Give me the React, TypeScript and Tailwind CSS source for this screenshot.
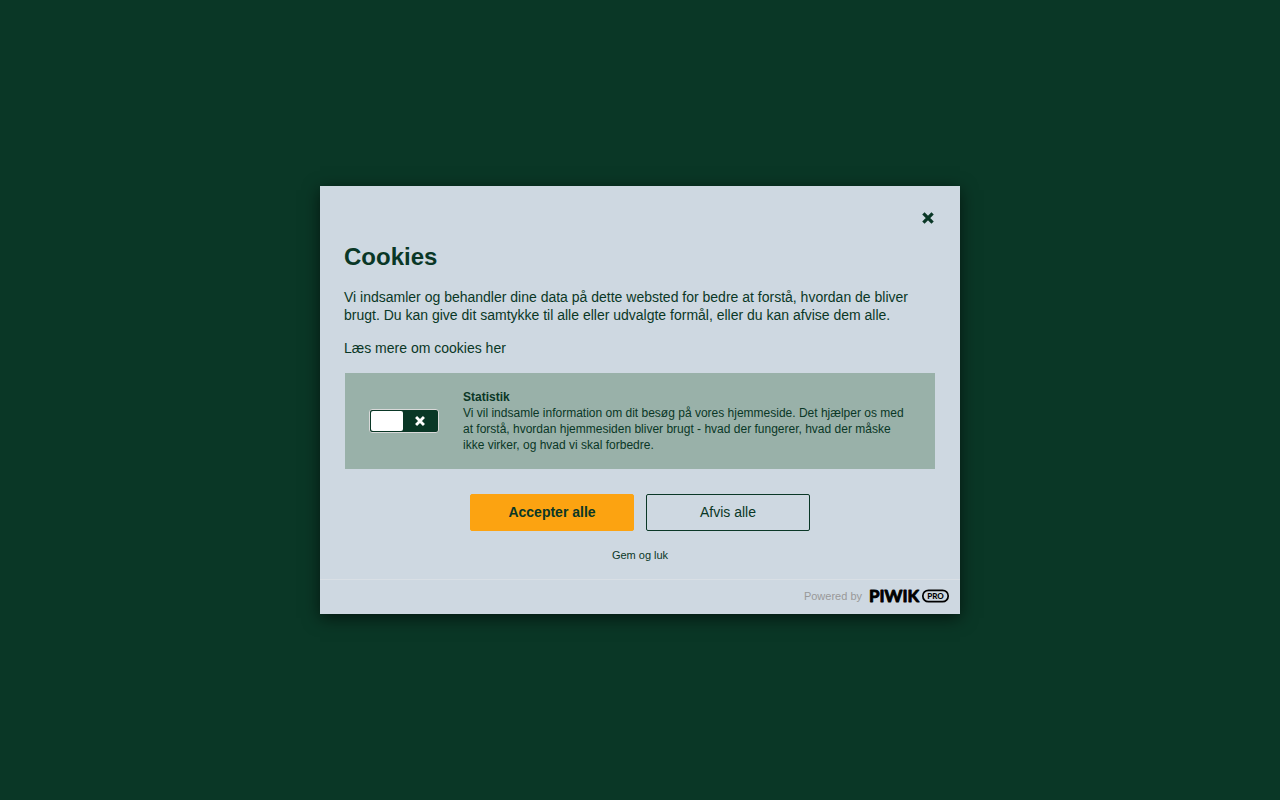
import { useState } from "react";

const CrossIcon = ({ className }: { className: string }) => (
  <svg viewBox="0 0 14 14" className={className} aria-hidden="true">
    <path
      d="M2.4 2.4L11.6 11.6M11.6 2.4L2.4 11.6"
      fill="none"
      stroke="currentColor"
      strokeWidth="3.3"
    />
  </svg>
);

const PiwikLogo = () => (
  <svg
    width="80"
    height="18"
    viewBox="0 0 80 18"
    className="overflow-visible"
    role="img"
    aria-label="Piwik PRO"
  >
    <text
      x="-1"
      y="15"
      fontFamily="Lato, sans-serif"
      fontSize="17"
      fontWeight="700"
      stroke="#000"
      strokeWidth="0.9"
      strokeLinejoin="round"
    >
      PIWIK
    </text>
    <rect
      x="52.8"
      y="3.3"
      width="25.4"
      height="11.4"
      rx="5.7"
      fill="none"
      stroke="#000"
      strokeWidth="1.7"
    />
    <text
      x="65.5"
      y="12"
      textAnchor="middle"
      fontFamily="Lato, sans-serif"
      fontSize="8"
      fontWeight="900"
    >
      PRO
    </text>
  </svg>
);

const ConsentSwitch = () => {
  const [checked, setChecked] = useState(false);

  return (
    <label
      htmlFor="statistik"
      className={`relative flex h-6 w-[70px] shrink-0 cursor-pointer items-center rounded-[3px] border border-[#d9d9d9] bg-[#0a3726] p-px ${
        checked ? "flex-row-reverse" : ""
      }`}
    >
      <input
        id="statistik"
        type="checkbox"
        className="sr-only"
        aria-labelledby="statistik-title"
        checked={checked}
        onChange={(e) => setChecked(e.target.checked)}
      />
      <span className="h-5 w-8 rounded-xs bg-white" />
      <span className="flex flex-1 justify-center text-white">
        <CrossIcon className="size-3" />
      </span>
    </label>
  );
};

export default function App() {
  return (
    <div className="flex min-h-screen items-center justify-center bg-[#0a3726] font-['Liberation_Sans',Arial,sans-serif] text-[#0a3726]">
      <div
        role="dialog"
        aria-labelledby="consent-title"
        className="w-full max-w-[640px] bg-[#ced8e1] shadow-[0_4px_16px_rgba(0,0,0,0.6)]"
      >
        <div className="px-6 pt-6">
          <div className="flex justify-end">
            <button type="button" aria-label="Luk" className="flex size-4 items-center justify-center">
              <CrossIcon className="size-3.5" />
            </button>
          </div>
          <h1 id="consent-title" className="mt-4 text-2xl leading-[30px] font-bold">
            Cookies
          </h1>
          <p className="mt-4 text-sm leading-[18px]">
            Vi indsamler og behandler dine data på dette websted for bedre at
            forstå, hvordan de bliver brugt. Du kan give dit samtykke til alle
            eller udvalgte formål, eller du kan afvise dem alle.
          </p>
          <p className="mt-[15px] text-sm leading-[18px]">
            <a href="#cookies">Læs mere om cookies her</a>
          </p>

          <div className="mx-px mt-4 flex items-center gap-6 bg-[#99b1a9] px-6 py-4">
            <ConsentSwitch />
            <div className="text-xs leading-4">
              <h2 id="statistik-title" className="font-bold">
                Statistik
              </h2>
              <p>
                Vi vil indsamle information om dit besøg på vores hjemmeside. Det
                hjælper os med at forstå, hvordan hjemmesiden bliver brugt - hvad
                der fungerer, hvad der måske ikke virker, og hvad vi skal
                forbedre.
              </p>
            </div>
          </div>

          <div className="mt-[25px] flex justify-center gap-3 text-sm">
            <button type="button" className="h-[37px] w-[164px] rounded-xs border border-[#fca311] bg-[#fca311] pb-0.5 font-bold">
              Accepter alle
            </button>
            <button type="button" className="h-[37px] w-[164px] rounded-xs border border-[#0a3726] pb-0.5">
              Afvis alle
            </button>
          </div>
          <div className="flex justify-center py-4">
            <button type="button" className="text-[11px] leading-4">
              Gem og luk
            </button>
          </div>
        </div>

        <footer className="flex h-[35px] items-center justify-end gap-2 border-t border-[#d9dfe5] pr-[10px] pb-0.5 text-[11px] text-[#999]">
          <span>Powered by</span>
          <span className="text-black">
            <PiwikLogo />
          </span>
        </footer>
      </div>
    </div>
  );
}
